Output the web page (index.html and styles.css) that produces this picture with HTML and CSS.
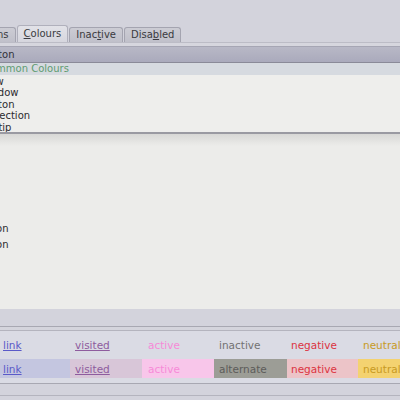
FILE: index.html
```html
<!DOCTYPE html>
<html>
<head>
<meta charset="utf-8">
<link rel="stylesheet" href="styles.css">
</head>
<body>
<div class="window">
  <div class="top"></div>
  <div class="tabs">
    <div class="tab first">Options</div>
    <div class="tab active"><u>C</u>olours</div>
    <div class="tab">Inac<u>t</u>ive</div>
    <div class="tab">Disa<u>b</u>led</div>
  </div>
  <div class="strip"></div>
  <div class="combo"><span class="clip">Button</span></div>
  <div class="list">
    <div class="row head"><span class="clip">Common Colours</span></div>
    <div class="row"><span class="clip v">View</span></div>
    <div class="row"><span class="clip">Window</span></div>
    <div class="row"><span class="clip b">Button</span></div>
    <div class="row"><span class="clip s">Selection</span></div>
    <div class="row"><span class="clip">Tooltip</span></div>
  </div>
  <div class="main">
    <div class="label l1"><span class="clip c">Button</span></div>
    <div class="label"><span class="clip c">Button</span></div>
  </div>
  <div class="bottom">
    <div class="sep"></div>
    <div class="samples">
      <div class="srow first-row">
        <span class="cell link">link</span>
        <span class="cell visited">visited</span>
        <span class="cell activec">active</span>
        <span class="cell inactive">inactive</span>
        <span class="cell negative">negative</span>
        <span class="cell neutral">neutral</span>
      </div>
      <div class="srow alt">
        <span class="cell link bg-link">link</span>
        <span class="cell visited bg-visited">visited</span>
        <span class="cell activec bg-active">active</span>
        <span class="cell alternate">alternate</span>
        <span class="cell negative bg-negative">negative</span>
        <span class="cell neutral bg-neutral">neutral</span>
      </div>
    </div>
    <div class="foot"></div>
  </div>
</div>
</body>
</html>
```

FILE: styles.css
```css
html, body {
  margin: 0;
  padding: 0;
}
body {
  width: 400px;
  height: 400px;
  overflow: hidden;
  background: #d3d3dc;
  font-family: "DejaVu Sans", "Liberation Sans", sans-serif;
  font-size: 10px;
  color: #2a2a2e;
}
.window {
  display: flex;
  flex-direction: column;
  width: 400px;
  height: 400px;
}
.top {
  height: 25px;
}
.tabs {
  display: flex;
  align-items: flex-end;
  gap: 1px;
  height: 17px;
}
.tab {
  height: 14px;
  line-height: 13px;
  padding: 0 6px;
  border: 1px solid #a4a4b0;
  border-bottom: none;
  border-radius: 3px 3px 0 0;
  background: linear-gradient(#ccccd4, #c0c0ca);
  color: #3a3a40;
  white-space: nowrap;
  flex-shrink: 0;
}
.tab.first {
  margin-left: -37px;
}
.tab.active {
  height: 16px;
  line-height: 15px;
  background: linear-gradient(#e2e2e8, #d6d6de);
  border-color: #b0b0bc;
}
.tab u {
  text-decoration-thickness: 1px;
  text-underline-offset: 1px;
}
.strip {
  height: 3px;
  border-top: 1px solid #bcbcc6;
  background: #d6d6de;
}
.combo {
  height: 15px;
  line-height: 15px;
  border-top: 1px solid #a6a6b4;
  border-bottom: 1px solid #8a8a98;
  background: linear-gradient(#b8b8c6, #aaaabc);
  color: #303038;
  overflow: hidden;
  white-space: nowrap;
}
.clip {
  display: inline-block;
  margin-left: -21px;
}
.clip.v {
  margin-left: -20px;
}
.clip.b {
  margin-left: -19px;
}
.clip.s {
  margin-left: -16px;
}
.combo .clip {
  margin-left: -19px;
}
.list {
  height: 69px;
  background: #eeeeec;
  border-bottom: 2px solid #9a9aa2;
  overflow: hidden;
  white-space: nowrap;
}
.row {
  height: 11.5px;
  line-height: 11px;
}
.row.head {
  height: 12px;
  line-height: 12px;
  background: #d6dae0;
  color: #5f9c72;
  margin-bottom: 0.5px;
}
.row.head .clip {
  margin-left: -17px;
}
.main {
  height: 175px;
  background: linear-gradient(#d8d8d6 0, #ececea 12px, #ececea 100%);
  overflow: hidden;
  white-space: nowrap;
}
.label {
  height: 16px;
  line-height: 16px;
}
.label.l1 {
  margin-top: 87px;
}
.clip.c {
  margin-left: -25px;
}
.bottom {
  flex: 1;
  display: flex;
  flex-direction: column;
  background: #d3d3dc;
}
.sep {
  height: 17px;
  border-bottom: 1px solid #a8a8b2;
}
.samples {
  height: 52px;
  border-top: 3px solid #d4d4dc;
  border-bottom: 1px solid #a8a8b2;
  background: #dadbe4;
  box-shadow: inset 0 1px 0 #b4b4be;
  padding-top: 1px;
  display: flex;
  flex-direction: column;
  font-size: 10.5px;
}
.srow {
  display: flex;
  height: 22px;
  align-items: center;
}
.srow.first-row {
  height: 21px;
  padding-top: 3px;
}
.srow.alt {
  margin-top: 4px;
  height: 19px;
  align-items: stretch;
}
.cell {
  display: flex;
  align-items: center;
  flex-shrink: 0;
  box-sizing: border-box;
  white-space: nowrap;
}
.cell:nth-child(1) { width: 70px; padding-left: 3px; }
.cell:nth-child(2) { width: 72px; padding-left: 5px; }
.cell:nth-child(3) { width: 72px; padding-left: 6px; }
.cell:nth-child(4) { width: 73px; padding-left: 5px; }
.cell:nth-child(5) { width: 71px; padding-left: 4px; }
.cell:nth-child(6) { width: 60px; padding-left: 5px; }
.link {
  color: #5a5ac8;
  text-decoration: underline;
}
.visited {
  color: #8e5c9e;
  text-decoration: underline;
}
.activec { color: #f78ad8; }
.inactive { color: #727272; }
.negative { color: #dc3442; }
.neutral { color: #c89a22; }
.bg-link { background: #c4c6e0; }
.bg-visited { background: #d8c6d8; }
.bg-active { background: #f8c6ea; }
.alternate { background: #9c9d96; color: #5c5c5a; }
.bg-negative { background: #ecc4c8; }
.bg-neutral { background: #f4d270; }
.foot {
  flex: 1;
  border-bottom: 1px solid #b4b4be;
  margin-bottom: 4px;
}
```
